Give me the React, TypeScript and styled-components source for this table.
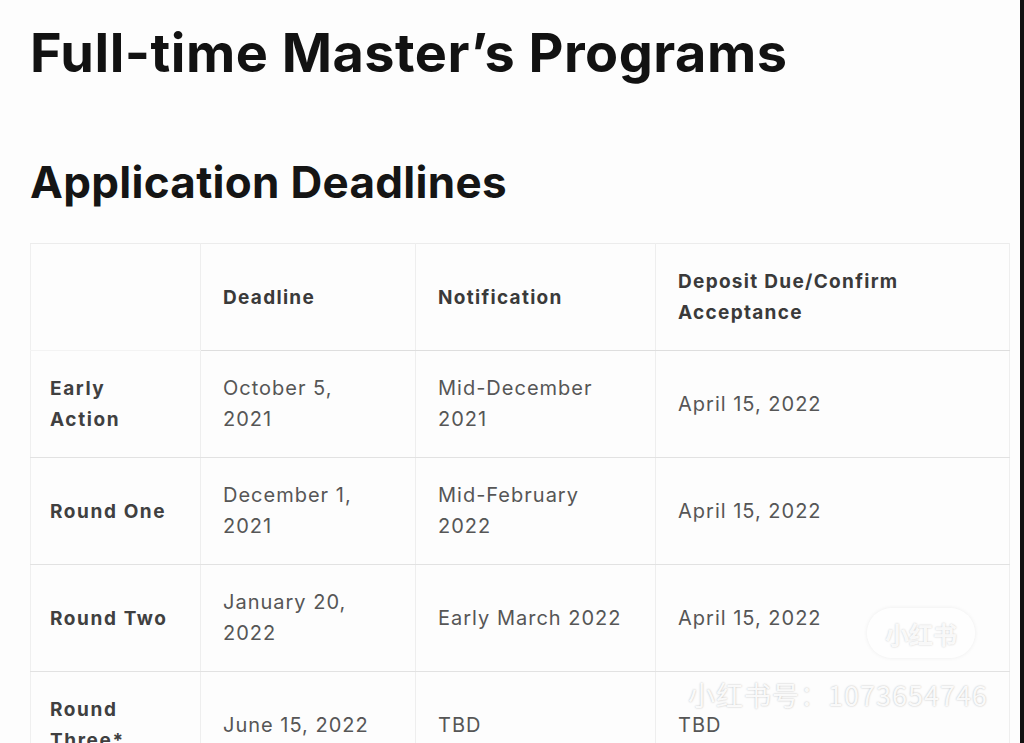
import styled, { createGlobalStyle } from 'styled-components'

type TRow = {
    label: string
    deadline: string
    notification: string
    deposit: string
}

const rows: TRow[] = [
    { label: 'Early Action', deadline: 'October 5, 2021', notification: 'Mid-December 2021', deposit: 'April 15, 2022' },
    { label: 'Round One', deadline: 'December 1, 2021', notification: 'Mid-February 2022', deposit: 'April 15, 2022' },
    { label: 'Round Two', deadline: 'January 20, 2022', notification: 'Early March 2022', deposit: 'April 15, 2022' },
    { label: 'Round Three*', deadline: 'June 15, 2022', notification: 'TBD', deposit: 'TBD' },
]

export default function App() {
    return (
        <>
            <GlobalStyle />
            <Page>
                <Title>Full-time Master’s Programs</Title>
                <Subtitle>Application Deadlines</Subtitle>
                <Table>
                    <colgroup>
                        <col style={{ width: 170 }} />
                        <col style={{ width: 215 }} />
                        <col style={{ width: 240 }} />
                        <col />
                    </colgroup>
                    <thead>
                        <tr>
                            <Corner />
                            <HeadCell>Deadline</HeadCell>
                            <HeadCell>Notification</HeadCell>
                            <HeadCell>
                                Deposit Due/Confirm
                                <br />
                                Acceptance
                            </HeadCell>
                        </tr>
                    </thead>
                    <tbody>
                        {rows.map(r => (
                            <tr key={r.label}>
                                <LabelCell>{r.label}</LabelCell>
                                <Cell $padRight={40}>{r.deadline}</Cell>
                                <Cell $padRight={28}>{r.notification}</Cell>
                                <Cell $padRight={20}>{r.deposit}</Cell>
                            </tr>
                        ))}
                    </tbody>
                </Table>
                <Badge>小红书</Badge>
                <Watermark>小红书号：1073654746</Watermark>
            </Page>
        </>
    )
}

const GlobalStyle = createGlobalStyle`
    html, body {
        margin: 0;
        padding: 0;
        background: #fdfdfd;
        overflow: hidden;
    }
`

const Page = styled.div`
    position: relative;
    box-sizing: border-box;
    width: 1024px;
    height: 743px;
    overflow: hidden;
    padding: 18px 0 0 30px;
    border-right: 4px solid #111;
    background: #fdfdfd;
    font-family: 'Inter', 'Noto Sans CJK SC', sans-serif;
`

const Title = styled.h1`
    margin: 0;
    font-size: 54px;
    line-height: 70px;
    font-weight: 700;
    color: #121212;
    letter-spacing: 0.5px;
`

const Subtitle = styled.h2`
    margin: 66px 0 0 0;
    font-size: 44px;
    line-height: 56px;
    font-weight: 700;
    color: #151515;
    letter-spacing: 0.3px;
`

const Table = styled.table`
    margin-top: 33px;
    width: 980px;
    border-collapse: collapse;
    table-layout: fixed;
    border-top: 1px solid #ececec;
    border-left: 1px solid #efefef;
    border-right: 1px solid #e4e4e4;

    tr {
        height: 107px;
    }
`

const BaseCell = styled.td`
    box-sizing: border-box;
    padding: 0 20px 0 22px;
    vertical-align: middle;
    font-size: 20px;
    line-height: 31px;
    letter-spacing: 1px;
`

const Corner = styled(BaseCell).attrs({ as: 'th' })`
    border-right: 1px solid #eeeeee;
    border-bottom: 1px solid #f3f3f3;
`

const HeadCell = styled(BaseCell).attrs({ as: 'th' })`
    text-align: left;
    font-weight: 700;
    font-size: 19px;
    letter-spacing: 1.3px;
    color: #3a3a3a;
    border-right: 1px solid #eeeeee;
    border-bottom: 1px solid #dedede;
`

const LabelCell = styled(BaseCell)`
    padding: 0 24px 0 19px;
    font-weight: 700;
    font-size: 19px;
    letter-spacing: 1.6px;
    color: #404040;
    border-right: 1px solid #eeeeee;
    border-bottom: 1px solid #e2e2e2;
`

const Cell = styled(BaseCell)<{ $padRight: number }>`
    color: #565656;
    padding-right: ${p => p.$padRight}px;
    border-right: 1px solid #eeeeee;
    border-bottom: 1px solid #e2e2e2;
`

const Badge = styled.div`
    position: absolute;
    left: 867px;
    top: 608px;
    width: 108px;
    height: 50px;
    border-radius: 25px;
    display: flex;
    align-items: center;
    justify-content: center;
    background: rgba(255, 255, 255, 0.6);
    box-shadow: 0 0 4px rgba(0, 0, 0, 0.07);
    font-family: 'Noto Sans CJK SC', sans-serif;
    font-weight: 700;
    font-size: 24px;
    color: rgba(255, 255, 255, 0.9);
    text-shadow: 0 0 2px rgba(0, 0, 0, 0.22);
`

const Watermark = styled.div`
    position: absolute;
    left: 688px;
    top: 677px;
    font-family: 'Noto Sans CJK SC', sans-serif;
    font-size: 27px;
    line-height: 36px;
    letter-spacing: 1px;
    color: rgba(255, 255, 255, 0.92);
    text-shadow: 0 0 2px rgba(0, 0, 0, 0.28);
    white-space: nowrap;
`
